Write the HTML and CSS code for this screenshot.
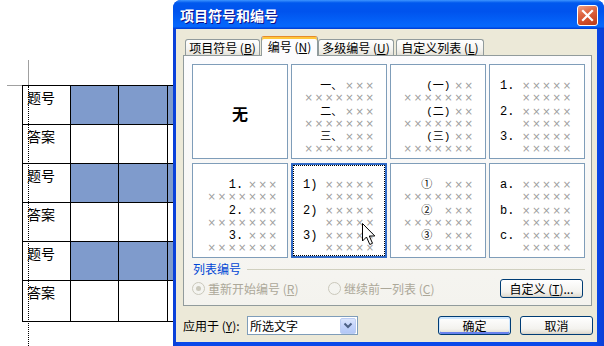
FILE: index.html
```html
<!DOCTYPE html>
<html lang="zh-CN">
<head>
<meta charset="utf-8">
<title>项目符号和编号</title>
<link rel="stylesheet" href="styles.css">
</head>
<body>
<div class="doc">
  <table class="sheet">
    <colgroup><col class="w48"><col class="w48"><col class="w49"><col class="w48"></colgroup>
    <tr><td>题号</td><td class="hl"></td><td class="hl"></td><td class="hl"></td></tr>
    <tr><td>答案</td><td></td><td></td><td></td></tr>
    <tr><td>题号</td><td class="hl"></td><td class="hl"></td><td class="hl"></td></tr>
    <tr><td>答案</td><td></td><td></td><td></td></tr>
    <tr><td>题号</td><td class="hl"></td><td class="hl"></td><td class="hl"></td></tr>
    <tr class="last"><td>答案</td><td></td><td></td><td></td></tr>
  </table>
</div>
<div class="mark-h"></div>
<div class="mark-v"></div>
<div class="margin-line"></div>

<div class="dialog">
  <div class="titlebar">
    <span class="title">项目符号和编号</span>
    <span class="close"><svg width="19" height="19" viewBox="0 0 19 19"><path d="M5 5 L14 14 M14 5 L5 14" stroke="#fff" stroke-width="2.2" stroke-linecap="square"/></svg></span>
  </div>
  <div class="body">
    <div class="tabs">
      <div class="tab t1">项目符号 (<u>B</u>)</div>
      <div class="tab active t2">编号 (<u>N</u>)</div>
      <div class="tab t3">多级编号 (<u>U</u>)</div>
      <div class="tab t4">自定义列表 (<u>L</u>)</div>
    </div>
    <div class="panel">
      <div class="cells">
        <div class="cell none">无</div>

        <div class="cell rt pa">
          <div class="blk">
            <div class="it"><div class="ln"><span class="cj">一、</span><span class="x">×××</span></div><div class="ln"><span class="x">×××××××</span></div></div>
            <div class="it"><div class="ln"><span class="cj">二、</span><span class="x">×××</span></div><div class="ln"><span class="x">×××××××</span></div></div>
            <div class="it"><div class="ln"><span class="cj">三、</span><span class="x">×××</span></div><div class="ln"><span class="x">×××××××</span></div></div>
          </div>
        </div>

        <div class="cell rt pa">
          <div class="blk">
            <div class="it"><div class="ln"><span class="pn">(一)</span><span class="x">××</span></div><div class="ln"><span class="x">×××××××</span></div></div>
            <div class="it"><div class="ln"><span class="pn">(二)</span><span class="x">××</span></div><div class="ln"><span class="x">×××××××</span></div></div>
            <div class="it"><div class="ln"><span class="pn">(三)</span><span class="x">××</span></div><div class="ln"><span class="x">×××××××</span></div></div>
          </div>
        </div>

        <div class="cell lt">
          <div class="it"><div class="ln"><span class="lb">1.</span><span class="x">×××××</span></div><div class="ln"><span class="lb"></span><span class="x">×××××</span></div></div>
          <div class="it"><div class="ln"><span class="lb">2.</span><span class="x">×××××</span></div><div class="ln"><span class="lb"></span><span class="x">×××××</span></div></div>
          <div class="it"><div class="ln"><span class="lb">3.</span><span class="x">×××××</span></div><div class="ln"><span class="lb"></span><span class="x">×××××</span></div></div>
        </div>

        <div class="cell rt pb">
          <div class="blk">
            <div class="it"><div class="ln"><span class="dg">1.</span><span class="x">×××</span></div><div class="ln"><span class="x">×××××××</span></div></div>
            <div class="it"><div class="ln"><span class="dg">2.</span><span class="x">×××</span></div><div class="ln"><span class="x">×××××××</span></div></div>
            <div class="it"><div class="ln"><span class="dg">3.</span><span class="x">×××</span></div><div class="ln"><span class="x">×××××××</span></div></div>
          </div>
        </div>

        <div class="cell lt sel">
          <div class="it"><div class="ln"><span class="lb">1)</span><span class="x">×××××</span></div><div class="ln"><span class="lb"></span><span class="x">×××××</span></div></div>
          <div class="it"><div class="ln"><span class="lb">2)</span><span class="x">×××××</span></div><div class="ln"><span class="lb"></span><span class="x">×××××</span></div></div>
          <div class="it"><div class="ln"><span class="lb">3)</span><span class="x">×××××</span></div><div class="ln"><span class="lb"></span><span class="x">×××××</span></div></div>
        </div>

        <div class="cell rt pa">
          <div class="blk">
            <div class="it"><div class="ln"><span class="ci">①</span><span class="x">×××</span></div><div class="ln"><span class="x">×××××××</span></div></div>
            <div class="it"><div class="ln"><span class="ci">②</span><span class="x">×××</span></div><div class="ln"><span class="x">×××××××</span></div></div>
            <div class="it"><div class="ln"><span class="ci">③</span><span class="x">×××</span></div><div class="ln"><span class="x">×××××××</span></div></div>
          </div>
        </div>

        <div class="cell lt">
          <div class="it"><div class="ln"><span class="lb">a.</span><span class="x">×××××</span></div><div class="ln"><span class="lb"></span><span class="x">×××××</span></div></div>
          <div class="it"><div class="ln"><span class="lb">b.</span><span class="x">×××××</span></div><div class="ln"><span class="lb"></span><span class="x">×××××</span></div></div>
          <div class="it"><div class="ln"><span class="lb">c.</span><span class="x">×××××</span></div><div class="ln"><span class="lb"></span><span class="x">×××××</span></div></div>
        </div>
      </div>

      <div class="group"><span>列表编号</span><span class="rule"></span></div>
      <div class="opts">
        <label class="opt o1"><span class="radio on"></span><span class="otext">重新开始编号 (<u>R</u>)</span></label>
        <label class="opt"><span class="radio"></span><span class="otext">继续前一列表 (<u>C</u>)</span></label>
        <span class="btn custom">自定义 (<u>T</u>)...</span>
      </div>
    </div>
    <div class="footer">
      <span class="apply">应用于 (<u>Y</u>):</span>
      <span class="combo"><span class="ctext">所选文字</span><span class="drop"><svg width="14" height="15" viewBox="0 0 14 15"><path d="M3.5 5.5 L7 9 L10.5 5.5" fill="none" stroke="#4d6185" stroke-width="2"/></svg></span></span>
      <span class="btn ok">确定</span>
      <span class="btn cancel">取消</span>
    </div>
  </div>
  <svg class="cursor" width="14" height="23" viewBox="0 0 14 23"><path d="M0.5 0.5 L0.5 18 L4.5 14 L7.8 21.5 L10.5 20.3 L7.3 13 L12.8 13 Z" fill="#fff" stroke="#000" stroke-width="1"/></svg>
</div>
</body>
</html>
```

FILE: styles.css
```css
html, body {
  margin: 0;
  padding: 0;
}
body {
  width: 604px;
  height: 346px;
  overflow: hidden;
  position: relative;
  background: #fff;
  font-family: "Noto Sans CJK SC", sans-serif;
  color: #000;
}

/* ---------- document behind the dialog ---------- */
.doc {
  padding: 85px 0 0 22px;
}
.sheet {
  border-collapse: collapse;
  table-layout: fixed;
  width: 193px;
}
.w48 { width: 48px; }
.w49 { width: 49px; }
.sheet tr { height: 39px; }
.sheet tr.last { height: 41px; }
.sheet td {
  border: 1px solid #000;
  padding: 3px 0 0 4px;
  vertical-align: top;
  font-size: 14px;
  line-height: 16px;
}
.sheet td.hl { background: #7f9bcc; }

.mark-h {
  position: absolute;
  left: 7px;
  top: 85px;
  width: 15px;
  height: 1px;
  background: #a0a0a0;
}
.mark-v {
  position: absolute;
  left: 28px;
  top: 60px;
  width: 1px;
  height: 25px;
  background: #a0a0a0;
}
.margin-line {
  position: absolute;
  left: 28px;
  top: 86px;
  height: 260px;
  border-left: 1px dotted #000;
}

/* ---------- dialog window ---------- */
.dialog {
  position: absolute;
  left: 173px;
  top: 0;
  width: 431px;
  height: 346px;
  display: flex;
  flex-direction: column;
  background: linear-gradient(90deg, #0a3fd6, #0a48ea 2%, #0a48ea 98%, #0a3fd6);
  border-radius: 8px 8px 0 0;
  overflow: hidden;
}
.titlebar {
  flex: none;
  height: 29px;
  display: flex;
  align-items: center;
  justify-content: space-between;
  padding: 0 6px 0 7px;
  background: linear-gradient(180deg, #3d95ff, #0058ee 10%, #0053ee 40%, #0566fb 85%, #0566fb 92%, #004ee8 96%, #0039d0);
}
.title {
  color: #fff;
  font-size: 14px;
  font-weight: bold;
  line-height: 16px;
  text-shadow: 1px 1px 0 #0f1089;
}
.close {
  width: 21px;
  height: 21px;
  margin-top: 2px;
  box-sizing: border-box;
  border: 1px solid #fff;
  border-radius: 3px;
  background: linear-gradient(160deg, #f0a085, #e06a46 35%, #d2502c 65%, #b83a1a);
  display: flex;
  align-items: center;
  justify-content: center;
}
.close svg { display: block; }

.body {
  flex: 1;
  margin: 0 7px 4px 3px;
  background: #ece9d8;
  padding: 7px 5px 0 7px;
  display: flex;
  flex-direction: column;
}

/* tabs */
.tabs {
  display: flex;
  align-items: flex-end;
  padding-left: 2px;
  height: 20px;
  margin-bottom: -1px;
  position: relative;
  z-index: 1;
}
.tab {
  box-sizing: border-box;
  height: 16px;
  margin-bottom: 1px;
  border: 1px solid #919b9c;
  border-bottom: none;
  border-radius: 3px 3px 0 0;
  background: linear-gradient(180deg, #fff, #f5f4f0 60%, #e4e2d9);
  font-size: 12px;
  line-height: 15px;
  text-align: center;
  white-space: nowrap;
}
.tab u, .otext u, .btn u, .apply u { text-underline-offset: 1px; }
.t1 { width: 75px; margin-right: 1px; }
.t2 { width: 57px; }
.t3 { width: 76px; margin-right: 2px; }
.t4 { width: 88px; }
.tab.active {
  height: 20px;
  margin-bottom: 0;
  border-top: 1px solid #e68b2c;
  box-shadow: inset 0 2px 0 #ffc73c;
  background: #fcfcfe;
  line-height: 19px;
}

.panel {
  border: 1px solid #919b9c;
  background: linear-gradient(180deg, #fcfcfe, #f4f3ee);
  padding: 8px 6px 7px 8px;
}
.cells {
  display: grid;
  grid-template-columns: repeat(4, 96px);
  grid-template-rows: 95px 95px;
  gap: 4px 3px;
}
.cell {
  box-sizing: border-box;
  background: #fff;
  border: 1px solid #7f9db9;
  padding: 11px 0 0 10px;
}
.cell.none {
  display: flex;
  align-items: center;
  justify-content: center;
  padding: 3px 0 0 0;
  font-size: 16px;
  font-weight: bold;
}
.cell.pa { padding-left: 10px; }
.cell.pb { padding-left: 12px; }
.cell.sel {
  border: 2px solid #316ac5;
  outline: 1px dotted #000;
  outline-offset: -3px;
  padding: 10px 0 0 10px;
}
.blk {
  width: 72px;
  text-align: right;
}
.it { margin-bottom: 1.5px; }
.ln {
  height: 12px;
  line-height: 12px;
  white-space: nowrap;
}
.ln span { line-height: 12px; vertical-align: baseline; }
.x {
  font-family: "DejaVu Sans", sans-serif;
  font-size: 10px;
  letter-spacing: 1.8px;
  margin-right: -1.8px;
  color: #9d9d9d;
}
.cj {
  font-size: 11px;
  margin-right: 3px;
}
.pn {
  font-family: "Liberation Mono", "Noto Sans CJK SC", monospace;
  font-size: 11px;
  margin-right: 4px;
}
.dg {
  font-family: "Liberation Mono", monospace;
  font-size: 12px;
  margin-right: 5px;
}
.ci {
  font-size: 11px;
  margin-right: 12px;
}
.lb {
  display: inline-block;
  width: 22px;
  text-align: left;
  font-family: "Liberation Mono", monospace;
  font-size: 12px;
}

/* group */
.group {
  display: flex;
  align-items: center;
  margin-top: 4px;
  height: 14px;
  padding-left: 1px;
  font-size: 12px;
  line-height: 14px;
  color: #0046d5;
}
.rule {
  flex: 1;
  height: 1px;
  margin-left: 6px;
  background: #d0d0bf;
}
.opts {
  display: flex;
  align-items: center;
  height: 19px;
  margin-top: 3px;
  font-size: 12px;
}
.opt {
  display: flex;
  align-items: center;
  color: #aca899;
}
.o1 { width: 136px; }
.radio {
  box-sizing: border-box;
  width: 13px;
  height: 13px;
  border: 1px solid #cac8bb;
  border-radius: 50%;
  background: #f4f4f0;
  display: flex;
  align-items: center;
  justify-content: center;
  margin-right: 3px;
}
.radio.on::after {
  content: "";
  width: 5px;
  height: 5px;
  border-radius: 50%;
  background: #cac8bb;
}
.btn {
  box-sizing: border-box;
  height: 19px;
  border: 1px solid #003c74;
  border-radius: 3px;
  background: linear-gradient(180deg, #fff, #f3f2ee 70%, #e3e0d6 92%, #d6d0c5);
  font-size: 12px;
  line-height: 17px;
  text-align: center;
  white-space: nowrap;
}
.custom {
  width: 83px;
  margin-left: auto;
  margin-right: 2px;
}

/* footer */
.footer {
  display: flex;
  align-items: center;
  height: 19px;
  margin-top: 10px;
  font-size: 12px;
}
.apply {
  width: 64px;
  white-space: nowrap;
}
.combo {
  box-sizing: border-box;
  width: 111px;
  height: 19px;
  border: 1px solid #7f9db9;
  background: #fff;
  display: flex;
  align-items: center;
  padding: 0 1px 0 2px;
}
.ctext { flex: 1; line-height: 17px; }
.drop {
  box-sizing: border-box;
  width: 16px;
  height: 16px;
  border: 1px solid #bccdf3;
  border-radius: 2px;
  background: linear-gradient(180deg, #dbe5fc, #c3d3fb 50%, #b3c8f6);
  display: flex;
  align-items: center;
  justify-content: center;
}
.drop svg { display: block; }
.ok {
  width: 73px;
  margin-left: auto;
  box-shadow: inset 0 1px 0 1px #cee7ff, inset 0 -1px 0 1px #6982ee;
}
.cancel {
  width: 73px;
  margin-left: 9px;
  margin-right: -1px;
}

.cursor {
  position: absolute;
  left: 189px;
  top: 223px;
}
```
